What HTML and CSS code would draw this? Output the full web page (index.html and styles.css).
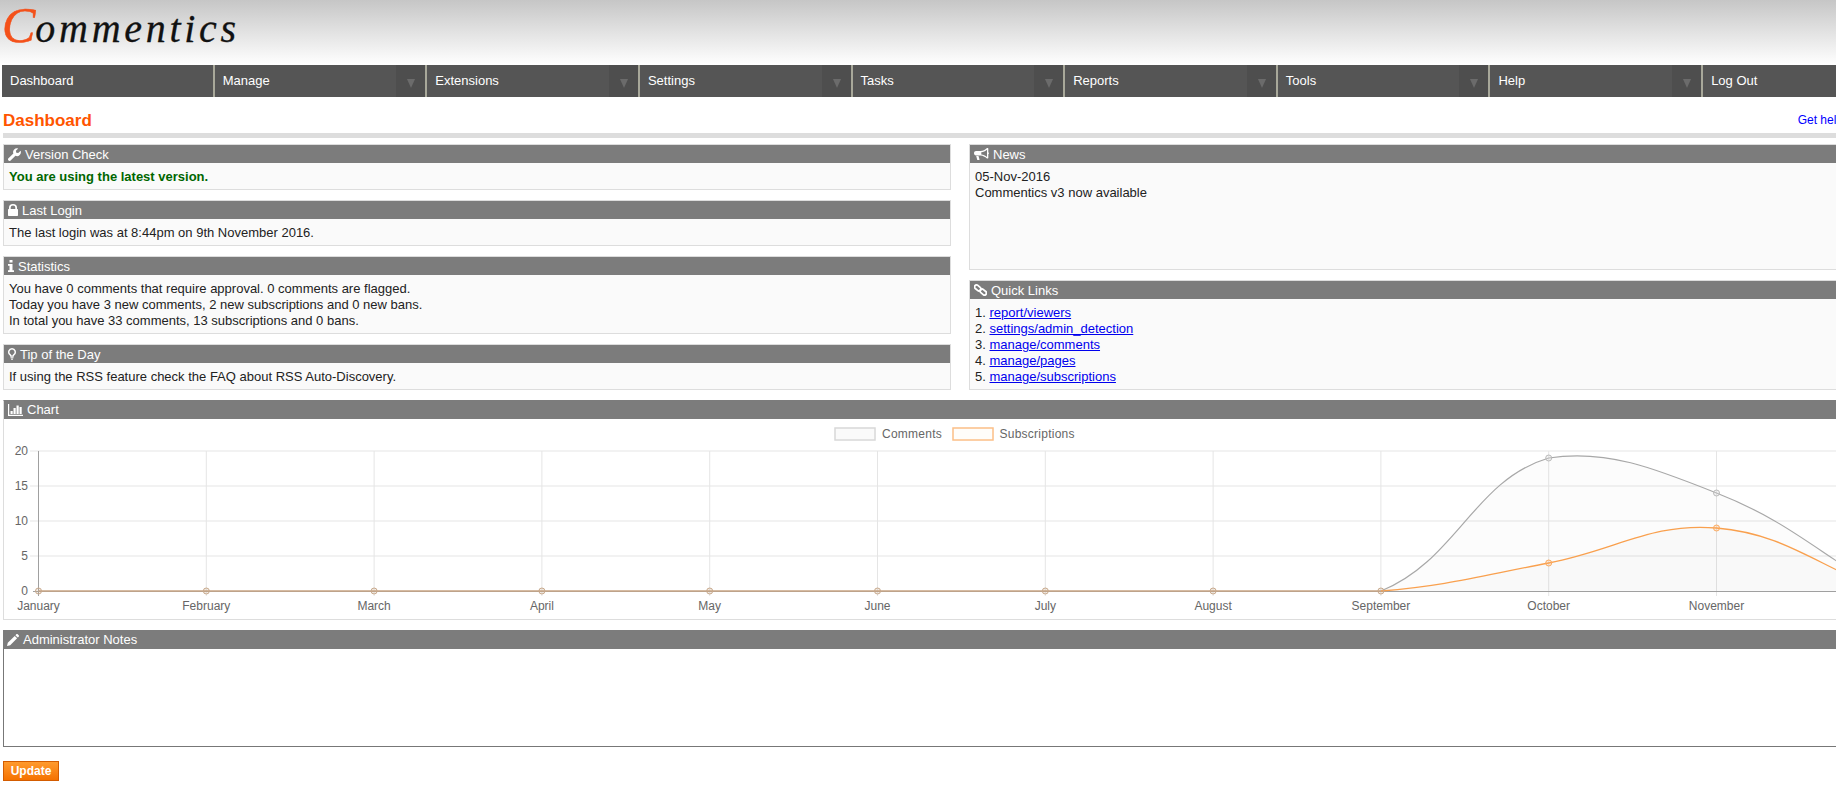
FILE: index.html
```html
<!DOCTYPE html>
<html>
<head>
  <title>Commentics - Dashboard</title>
  <link rel="stylesheet" href="styles.css">
</head>
<body>
<div class="page">
  <div class="header">
    <div class="logo"><span class="logoC">C</span>ommentics</div>
  </div>

  <div class="nav">
    <a class="navItem">Dashboard</a>
    <a class="navItem hasMenu">Manage</a>
    <a class="navItem hasMenu">Extensions</a>
    <a class="navItem hasMenu">Settings</a>
    <a class="navItem hasMenu">Tasks</a>
    <a class="navItem hasMenu">Reports</a>
    <a class="navItem hasMenu">Tools</a>
    <a class="navItem hasMenu">Help</a>
    <a class="navItem">Log Out</a>
  </div>

  <div class="content">
    <div class="titleRow">
      <h1>Dashboard</h1>
      <a class="helpLink" href="#">Get help</a>
    </div>

    <div class="columns">
      <div class="column">
        <div class="panel">
          <div class="panelHead">
            <svg width="13" height="13" viewBox="0 0 16 16"><path d="M2.900 15.600a1.900 1.900 0 0 1-2.600-2.600l6.300-6.200a4.800 4.800 0 0 1 6-6.300L9.700 3.400l.5 2.400 2.400.5 2.900-2.900a4.800 4.800 0 0 1-6.300 6.200z"/></svg>
            <span>Version Check</span>
          </div>
          <div class="panelBody latest">You are using the latest version.</div>
        </div>

        <div class="panel">
          <div class="panelHead">
            <svg width="10" height="12" viewBox="0 0 10 12"><path d="M1 5V3.500a4 3.500 0 0 1 8 0V5h.3c.4 0 .7.300.7.700v5.600c0 .4-.3.700-.7.700H.7c-.4 0-.7-.3-.7-.7V5.700c0-.4.300-.7.700-.7zM2.700 5h4.600V3.600a2.300 2 0 0 0-4.600 0z"/></svg>
            <span>Last Login</span>
          </div>
          <div class="panelBody">The last login was at 8:44pm on 9th November 2016.</div>
        </div>

        <div class="panel">
          <div class="panelHead">
            <svg width="6" height="12" viewBox="0 0 6 12"><path d="M1.500 0h3v2.500h-3zM0 4h4.500v6.200H6V12H0v-1.800h1.500V5.800H0z"/></svg>
            <span>Statistics</span>
          </div>
          <div class="panelBody">
            You have 0 comments that require approval. 0 comments are flagged.<br>
            Today you have 3 new comments, 2 new subscriptions and 0 new bans.<br>
            In total you have 33 comments, 13 subscriptions and 0 bans.
          </div>
        </div>

        <div class="panel">
          <div class="panelHead">
            <svg width="8" height="12" viewBox="0 0 8 12"><path d="M4 0a4 4 0 0 1 2.600 7c-.5.600-.8 1-.9 1.700H2.300C2.200 8 1.900 7.600 1.400 7A4 4 0 0 1 4 0zm0 1.500A2.500 2.500 0 0 0 2.500 6c.5.500.8 1 1 1.500h1c.2-.5.500-1 1-1.500A2.500 2.500 0 0 0 4 1.500zM2.500 9.300h3v1h-3zM3 10.800h2l-.5 1.200h-1z"/></svg>
            <span>Tip of the Day</span>
          </div>
          <div class="panelBody">If using the RSS feature check the FAQ about RSS Auto-Discovery.</div>
        </div>
      </div>

      <div class="column">
        <div class="panel">
          <div class="panelHead">
            <svg width="15" height="12" viewBox="0 0 15 12"><path d="M13 0h.8c.3 0 .5.200.5.500v3.700c.4.200.7.500.7 1s-.3.800-.7 1v3.700c0 .3-.2.500-.5.500H13c-2-1.800-4-2.800-6.500-3H2c-1.100 0-2-.9-2-2.200s.9-2.200 2-2.200h4.500C9 3 11 1.800 13 0zm0 1.700C11.300 3 9.400 3.900 7.300 4.200v2.300c2.100.3 4 1.200 5.700 2.400zM2.200 8h2.300l1 3.500c.1.300-.1.500-.4.500H3.700c-.2 0-.4-.1-.5-.3z"/></svg>
            <span>News</span>
          </div>
          <div class="panelBody newsBody">
            05-Nov-2016<br>
            Commentics v3 now available
          </div>
        </div>

        <div class="panel">
          <div class="panelHead">
            <svg class="linkIcon" width="13" height="12" viewBox="0 0 13 12">
              <rect x="0.200" y="1.900" width="7" height="4" rx="2" transform="rotate(40 3.700 3.900)"/>
              <rect x="5.800" y="6.100" width="7" height="4" rx="2" transform="rotate(40 9.300 8.100)"/>
            </svg>
            <span>Quick Links</span>
          </div>
          <div class="panelBody">
            <ol class="links">
              <li><a href="#">report/viewers</a></li>
              <li><a href="#">settings/admin_detection</a></li>
              <li><a href="#">manage/comments</a></li>
              <li><a href="#">manage/pages</a></li>
              <li><a href="#">manage/subscriptions</a></li>
            </ol>
          </div>
        </div>
      </div>
    </div>

    <div class="panel wide">
      <div class="panelHead">
        <svg width="15" height="12" viewBox="0 0 15 12"><path d="M0 0h1.200v10.800H15V12H0zM2.500 7h2.200v3H2.500zM5.500 4h2.200v6H5.500zM8.500 1.500h2.200V10H8.500zM11.500 3h2.200v7h-2.200z"/></svg>
        <span>Chart</span>
      </div>
      <div class="chartBody">
        <svg class="chart" width="1914" height="200" viewBox="4 419 1914 200">
          <g class="grid">
            <path d="M30 451H1885M30 486H1885M30 521H1885M30 556H1885"/>
            <path d="M206.300 451V596M374.100 451V596M541.900 451V596M709.700 451V596M877.500 451V596M1045.300 451V596M1213.100 451V596M1380.900 451V596M1548.700 451V596M1716.500 451V596M1884.300 451V596"/>
          </g>
          <path class="axis" d="M38.500 451V596M33 591.500H1885"/>

          <path class="area" d="M1381 591C1456 561 1474 480 1548.700 458C1606 449 1654 468 1716.500 493C1788 521 1817 552 1884.300 591z"/>
          <path class="area" d="M1381 591C1449 585.400 1482 575.500 1548.700 563C1616 550 1651 522.500 1716.500 528C1785 533.700 1817 565.800 1884.300 591z"/>

          <path class="lineBase" d="M38.500 591H1381"/>
          <path class="lineGray" d="M1381 591C1456 561 1474 480 1548.700 458C1606 449 1654 468 1716.500 493C1788 521 1817 552 1884.300 591"/>
          <path class="lineOrange" d="M1381 591C1449 585.400 1482 575.500 1548.700 563C1616 550 1651 522.500 1716.500 528C1785 533.700 1817 565.800 1884.300 591"/>

          <g class="pointsBase">
            <circle cx="38.500" cy="591" r="3"/><circle cx="206.300" cy="591" r="3"/><circle cx="374.100" cy="591" r="3"/><circle cx="541.900" cy="591" r="3"/><circle cx="709.700" cy="591" r="3"/><circle cx="877.500" cy="591" r="3"/><circle cx="1045.300" cy="591" r="3"/><circle cx="1213.100" cy="591" r="3"/><circle cx="1380.900" cy="591" r="3"/>
          </g>
          <g class="pointsGray"><circle cx="1548.700" cy="458" r="3"/><circle cx="1716.500" cy="493" r="3"/></g>
          <g class="pointsOrange"><circle cx="1548.700" cy="563" r="3"/><circle cx="1716.500" cy="528" r="3"/></g>

          <rect class="legendGray" x="835" y="428" width="40" height="12"/>
          <text class="chartText legendText" x="882" y="438">Comments</text>
          <rect class="legendOrange" x="953" y="428" width="40" height="12"/>
          <text class="chartText legendText" x="999.500" y="438">Subscriptions</text>

          <g class="chartText yLabels">
            <text x="28" y="455">20</text><text x="28" y="490">15</text><text x="28" y="525">10</text><text x="28" y="560">5</text><text x="28" y="595">0</text>
          </g>
          <g class="chartText xLabels">
            <text x="38.500" y="610">January</text><text x="206.300" y="610">February</text><text x="374.100" y="610">March</text><text x="541.900" y="610">April</text><text x="709.700" y="610">May</text><text x="877.500" y="610">June</text><text x="1045.300" y="610">July</text><text x="1213.100" y="610">August</text><text x="1380.900" y="610">September</text><text x="1548.700" y="610">October</text><text x="1716.500" y="610">November</text>
          </g>
        </svg>
      </div>
    </div>

    <div class="notes">
      <div class="panelHead">
        <svg width="12" height="12" viewBox="0 0 12 12"><path d="M0 12l.8-3.200L7.700 1.900l2.400 2.400-6.900 6.900zM8.400 1.200 9.300.3c.4-.4 1-.4 1.400 0l1 1c.4.4.4 1 0 1.400l-.9.900z"/></svg>
        <span>Administrator Notes</span>
      </div>
      <textarea class="notesBox"></textarea>
    </div>

    <button class="update">Update</button>
  </div>
</div>
</body>
</html>
```

FILE: styles.css
```css
html, body {
  margin: 0;
  height: 100%;
  overflow: hidden;
}
body {
  background: #fff;
  color: #222;
  font-family: "Liberation Sans", Arial, sans-serif;
  font-size: 13px;
  line-height: 16px;
}
.page {
  width: 1920px;
}
.header {
  height: 65px;
  box-sizing: border-box;
  padding: 3px 0 0 2px;
  background: linear-gradient(#c6c6c6, #fff);
}
.logo {
  font-family: "Liberation Serif", serif;
  font-style: italic;
  font-size: 40px;
  line-height: 50px;
  letter-spacing: 3.7px;
  color: #111;
  -webkit-text-stroke: 0.3px #111;
}
.logoC {
  color: #f4511a;
  font-size: 50px;
  line-height: 44px;
  letter-spacing: 0;
  -webkit-text-stroke: 0.5px #f4511a;
}
.nav {
  display: flex;
  height: 32px;
  padding-left: 2px;
}
.navItem {
  position: relative;
  flex: 0 0 212.65px;
  box-sizing: border-box;
  padding-left: 8px;
  background: #555;
  border-right: 2px solid #a8a89a;
  color: #fff;
  line-height: 32px;
}
.navItem:last-child {
  border-right: none;
}
.hasMenu::after {
  content: "";
  position: absolute;
  top: 0;
  right: 0;
  width: 29px;
  height: 32px;
  background: #4e4e4e;
}
.hasMenu::before {
  content: "";
  position: absolute;
  z-index: 1;
  right: 10px;
  top: 14px;
  border-left: 4.5px solid transparent;
  border-right: 4.5px solid transparent;
  border-top: 9px solid #6b6b6b;
}
.content {
  margin-left: 3px;
  width: 1914px;
}
.titleRow {
  display: flex;
  justify-content: space-between;
  align-items: flex-end;
  height: 34px;
  padding-top: 2px;
  border-bottom: 5px solid #ddd;
}
h1 {
  margin: 0 0 2px;
  color: #ff5500;
  font-size: 17px;
  font-weight: bold;
  line-height: 20px;
}
.helpLink {
  margin-bottom: 5px;
  padding-right: 74px;
  color: #00f;
  font-size: 12px;
  text-decoration: none;
}
.columns {
  display: grid;
  grid-template-columns: 948px 948px;
  column-gap: 18px;
  margin-top: 6px;
}
.panel {
  margin-bottom: 10px;
  background: #fafafa;
  border: 1px solid #ddd;
}
.panelHead {
  display: flex;
  align-items: center;
  gap: 4px;
  height: 18px;
  padding-left: 4px;
  background: #7c7c7c;
  color: #fff;
}
.panelHead span {
  padding-top: 1px;
}
.panelHead svg {
  fill: #fff;
  flex: none;
}
.panelHead .linkIcon {
  fill: none;
  stroke: #fff;
  stroke-width: 1.8;
}
.panelBody {
  padding: 6px 5px 4px;
}
.latest {
  color: #060;
  font-weight: bold;
}
.newsBody {
  height: 96px;
}
.links {
  margin: 0;
  padding: 0;
  list-style-position: inside;
}
.links a {
  color: #00e;
}
.wide {
  background: #fff;
  border-top-color: #7c7c7c;
}
.wide .panelHead span, .notes .panelHead span {
  padding-top: 0;
}
.chartBody {
  height: 200px;
}
.chart {
  display: block;
}
.grid path {
  fill: none;
  stroke: #e5e5e5;
  stroke-width: 1;
}
.axis {
  fill: none;
  stroke: #a0a0a0;
  stroke-width: 1;
}
.area {
  fill: rgba(120, 120, 120, 0.025);
}
.lineBase {
  fill: none;
  stroke: #c8a583;
  stroke-width: 1.5;
}
.lineGray {
  fill: none;
  stroke: #a8a8a8;
  stroke-width: 1.2;
}
.lineOrange {
  fill: none;
  stroke: #f9a04e;
  stroke-width: 1.3;
}
.pointsBase circle {
  fill: rgba(200, 165, 130, 0.2);
  stroke: #c8a98c;
  stroke-width: 1;
}
.pointsGray circle {
  fill: rgba(220, 220, 220, 0.3);
  stroke: #bbb;
  stroke-width: 1;
}
.pointsOrange circle {
  fill: rgba(255, 170, 90, 0.2);
  stroke: #fbaa60;
  stroke-width: 1;
}
.legendGray {
  fill: #fafafa;
  stroke: #d8d8d8;
  stroke-width: 1.5;
}
.legendOrange {
  fill: #fffdfa;
  stroke: #fcbf87;
  stroke-width: 1.5;
}
.chartText {
  fill: #666;
  font-size: 12px;
}
.legendText {
  letter-spacing: 0.25px;
}
.yLabels {
  text-anchor: end;
}
.xLabels {
  text-anchor: middle;
}
.notes {
  border-top: 1px solid #7c7c7c;
  margin-bottom: 14px;
}
.notesBox {
  display: block;
  box-sizing: border-box;
  width: 100%;
  height: 98px;
  padding: 4px;
  background: #fff;
  border: 1px solid #777;
  border-top: none;
  resize: none;
}
.update {
  display: block;
  width: 56px;
  height: 20px;
  padding: 0;
  background: linear-gradient(#ff9a2e, #f57200);
  border: 1px solid #d35c00;
  color: #fff;
  font-family: "Liberation Sans", Arial, sans-serif;
  font-size: 12px;
  font-weight: bold;
}
```
